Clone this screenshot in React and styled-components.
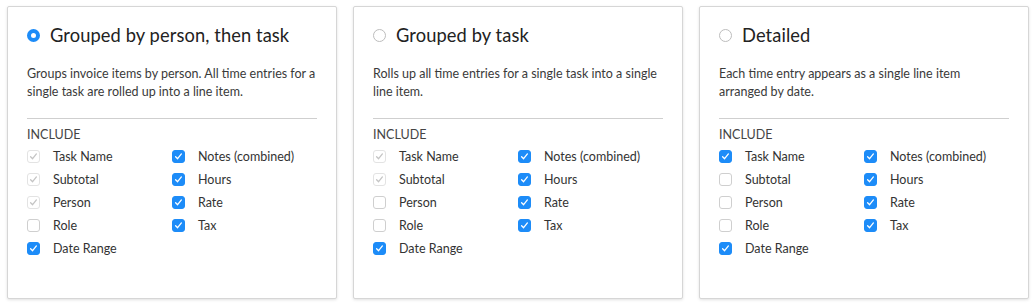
import React from "react";
import styled, { createGlobalStyle } from "styled-components";

const GlobalStyle = createGlobalStyle`
  body {
    margin: 0;
    background: #fff;
    font-family: Lato, "Open Sans", sans-serif;
    color: #333;
  }
`;

const Page = styled.div`
  display: flex;
  gap: 16px;
  padding: 6px 6px 6px 7px;
  width: 1036px;
  box-sizing: border-box;
`;

const Card = styled.div`
  width: 330px;
  height: 293px;
  box-sizing: border-box;
  border: 1px solid #d6d6d6;
  border-radius: 2px;
  box-shadow: 0 1px 3px rgba(0, 0, 0, 0.12);
  padding: 17px 19px 0 19px;
  background: #fff;
`;

const Header = styled.label`
  display: flex;
  align-items: center;
  gap: 10px;
  height: 22px;
  cursor: pointer;
`;

const Radio = styled.span`
  width: 13px;
  height: 13px;
  border-radius: 50%;
  box-sizing: border-box;
  flex: none;
  border: ${(p) => (p.$on ? "4px solid #1d8cf8" : "1px solid #bdbdbd")};
  background: #fff;
`;

const Title = styled.span`
  font-size: 18.3px;
  color: #222;
  letter-spacing: 0.1px;
`;

const Desc = styled.p`
  margin: 19px 0 0;
  font-size: 12.5px;
  line-height: 18px;
  color: #3a3a3a;
  height: 36px;
`;

const Divider = styled.hr`
  border: none;
  border-top: 1px solid #cfcfcf;
  margin: 17px 0 0;
`;

const Section = styled.div`
  margin-top: 8px;
  font-size: 12.5px;
  color: #444;
  line-height: 16px;
`;

const Grid = styled.div`
  display: grid;
  grid-template-columns: 145px 1fr;
  grid-auto-flow: column;
  grid-template-rows: repeat(5, 23px);
  margin-top: 2px;
`;

const Item = styled.label`
  display: flex;
  align-items: center;
  gap: 13px;
  font-size: 12.5px;
  color: #333;
`;

const Box = styled.span`
  width: 13px;
  height: 13px;
  box-sizing: border-box;
  border-radius: 3px;
  flex: none;
  display: flex;
  align-items: center;
  justify-content: center;
  background: ${(p) => (p.$on && !p.$locked ? "#1d8cf8" : "#fff")};
  border: 1px solid
    ${(p) => (p.$on && !p.$locked ? "#1d8cf8" : p.$locked ? "#e3e3e3" : "#cfcfcf")};
`;

const Check = ({ color }) => (
  <svg width="9" height="9" viewBox="0 0 9 9">
    <path
      d="M1.6 4.7 L3.6 6.7 L7.4 1.9"
      fill="none"
      stroke={color}
      strokeWidth="1.3"
      strokeLinecap="round"
      strokeLinejoin="round"
    />
  </svg>
);

const CheckItem = ({ label, on, locked }) => (
  <Item>
    <Box $on={on} $locked={locked}>
      {on && <Check color={locked ? "#c4c4c4" : "#fff"} />}
    </Box>
    {label}
  </Item>
);

const cards = [
  {
    title: "Grouped by person, then task",
    selected: true,
    desc: "Groups invoice items by person. All time entries for a single task are rolled up into a line item.",
    left: [
      ["Task Name", true, true],
      ["Subtotal", true, true],
      ["Person", true, true],
      ["Role", false],
      ["Date Range", true],
    ],
  },
  {
    title: "Grouped by task",
    desc: "Rolls up all time entries for a single task into a single line item.",
    left: [
      ["Task Name", true, true],
      ["Subtotal", true, true],
      ["Person", false],
      ["Role", false],
      ["Date Range", true],
    ],
  },
  {
    title: "Detailed",
    desc: "Each time entry appears as a single line item arranged by date.",
    left: [
      ["Task Name", true],
      ["Subtotal", false],
      ["Person", false],
      ["Role", false],
      ["Date Range", true],
    ],
  },
];

const right = ["Notes (combined)", "Hours", "Rate", "Tax"];

export default function App() {
  return (
    <>
      <GlobalStyle />
      <Page>
        {cards.map((c) => (
          <Card key={c.title}>
            <Header>
              <Radio $on={c.selected} />
              <Title>{c.title}</Title>
            </Header>
            <Desc>{c.desc}</Desc>
            <Divider />
            <Section>INCLUDE</Section>
            <Grid>
              {c.left.map(([l, on, locked]) => (
                <CheckItem key={l} label={l} on={on} locked={locked} />
              ))}
              {right.map((l) => (
                <CheckItem key={l} label={l} on />
              ))}
            </Grid>
          </Card>
        ))}
      </Page>
    </>
  );
}
